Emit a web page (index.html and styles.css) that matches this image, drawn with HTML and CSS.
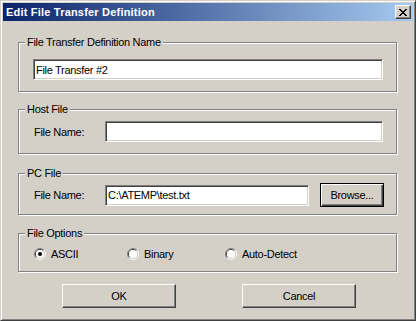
FILE: index.html
```html
<!DOCTYPE html>
<html lang="en">
<head>
    <meta charset="UTF-8">
    <title>Edit File Transfer Definition</title>
    <link rel="stylesheet" href="styles.css">
</head>
<body>
<div class="dialog">
    <div class="titlebar">
        <span class="title">Edit File Transfer Definition</span>
        <span class="close_btn">
            <svg width="8" height="7" viewBox="0 0 8 7">
                <path d="M0 0h2v1h-2zM6 0h2v1h-2zM1 1h2v1h-2zM5 1h2v1h-2zM2 2h4v1h-4zM3 3h2v1h-2zM2 4h4v1h-4zM1 5h2v1h-2zM5 5h2v1h-2zM0 6h2v1h-2zM6 6h2v1h-2z" fill="#000"/>
            </svg>
        </span>
    </div>

    <div class="content">
        <fieldset class="group group_name">
            <legend>File Transfer Definition Name</legend>
            <div class="row">
                <input type="text" class="edit edit_full" value="File Transfer #2">
            </div>
        </fieldset>

        <fieldset class="group group_host">
            <legend>Host File</legend>
            <div class="row">
                <label class="field_label">File Name:</label>
                <input type="text" class="edit edit_host" value="">
            </div>
        </fieldset>

        <fieldset class="group group_pc">
            <legend>PC File</legend>
            <div class="row">
                <label class="field_label">File Name:</label>
                <input type="text" class="edit edit_pc" value="C:\ATEMP\test.txt">
                <span class="btn btn_default browse">Browse...</span>
            </div>
        </fieldset>

        <fieldset class="group group_options">
            <legend>File Options</legend>
            <div class="row radios">
                <span class="radio radio_ascii">
                    <svg width="12" height="12" viewBox="0 0 12 12">
                        <path d="M2.1 9.9A5.5 5.5 0 0 1 9.9 2.1" fill="none" stroke="#808080"/>
                        <path d="M9.9 2.1A5.5 5.5 0 0 1 2.1 9.9" fill="none" stroke="#fff"/>
                        <path d="M2.8 9.2A4.5 4.5 0 0 1 9.2 2.8" fill="none" stroke="#404040"/>
                        <path d="M9.2 2.8A4.5 4.5 0 0 1 2.8 9.2" fill="none" stroke="#d4d0c8"/>
                        <circle cx="6" cy="6" r="4" fill="#fff"/>
                        <circle cx="6" cy="6" r="2" fill="#000"/>
                    </svg>
                    ASCII
                </span>
                <span class="radio radio_binary">
                    <svg width="12" height="12" viewBox="0 0 12 12">
                        <path d="M2.1 9.9A5.5 5.5 0 0 1 9.9 2.1" fill="none" stroke="#808080"/>
                        <path d="M9.9 2.1A5.5 5.5 0 0 1 2.1 9.9" fill="none" stroke="#fff"/>
                        <path d="M2.8 9.2A4.5 4.5 0 0 1 9.2 2.8" fill="none" stroke="#404040"/>
                        <path d="M9.2 2.8A4.5 4.5 0 0 1 2.8 9.2" fill="none" stroke="#d4d0c8"/>
                        <circle cx="6" cy="6" r="4" fill="#fff"/>
                    </svg>
                    Binary
                </span>
                <span class="radio radio_auto">
                    <svg width="12" height="12" viewBox="0 0 12 12">
                        <path d="M2.1 9.9A5.5 5.5 0 0 1 9.9 2.1" fill="none" stroke="#808080"/>
                        <path d="M9.9 2.1A5.5 5.5 0 0 1 2.1 9.9" fill="none" stroke="#fff"/>
                        <path d="M2.8 9.2A4.5 4.5 0 0 1 9.2 2.8" fill="none" stroke="#404040"/>
                        <path d="M9.2 2.8A4.5 4.5 0 0 1 2.8 9.2" fill="none" stroke="#d4d0c8"/>
                        <circle cx="6" cy="6" r="4" fill="#fff"/>
                    </svg>
                    Auto-Detect
                </span>
            </div>
        </fieldset>

        <div class="actions">
            <span class="btn ok">OK</span>
            <span class="btn cancel">Cancel</span>
        </div>
    </div>
</div>
</body>
</html>
```

FILE: styles.css
```css
body {
    margin: 0;
    padding: 0;
    background: #d4d0c8;
    font-family: "Liberation Sans", Arial, sans-serif;
    font-size: 11px;
    letter-spacing: -0.3px;
    color: #000;
}

.dialog {
    box-sizing: border-box;
    width: 416px;
    height: 321px;
    padding: 2px;
    background: #d4d0c8;
    border: 1px solid;
    border-color: #d4d0c8 #404040 #404040 #d4d0c8;
    box-shadow: inset 1px 1px 0 #fff, inset -1px -1px 0 #808080;
}

.titlebar {
    height: 18px;
    display: flex;
    align-items: center;
    justify-content: space-between;
    padding: 0 2px 0 3px;
    background: linear-gradient(to right, #0a246a, #a6caf0);
}

.title {
    color: #fff;
    font-weight: bold;
    font-size: 11px;
    letter-spacing: 0.2px;
    line-height: 13px;
}

.close_btn {
    box-sizing: border-box;
    width: 16px;
    height: 14px;
    display: flex;
    align-items: center;
    justify-content: center;
    background: #d4d0c8;
    border: 1px solid;
    border-color: #fff #404040 #404040 #fff;
    box-shadow: inset -1px -1px 0 #808080;
}

.content {
    padding: 0 15px;
}

/* etched group boxes */
.group {
    margin: 15px 1px 0 0;
    padding: 0;
    border: 1px solid #808080;
    box-shadow: 1px 1px 0 #fff, inset 1px 1px 0 #fff;
    min-inline-size: 0;
}

.group legend {
    margin-left: 6px;
    padding: 0 2px;
    line-height: 13px;
    background: #d4d0c8;
}

.group_host {
    margin-top: 11px;
}

.group_pc {
    margin-top: 13px;
}

.group_options {
    margin-top: 12px;
}

.row {
    display: flex;
    align-items: center;
}

.group_name .row {
    padding: 10px 0 11px 14px;
}

.group_host .row {
    padding: 5px 0 11px 15px;
}

.group_pc .row {
    padding: 3px 0 7px 15px;
}

.field_label {
    width: 71px;
}

.edit {
    box-sizing: border-box;
    height: 21px;
    margin: 0;
    padding: 0 2px;
    font-family: "Liberation Sans", Arial, sans-serif;
    font-size: 11px;
    letter-spacing: -0.3px;
    color: #000;
    background: #fff;
    border: 1px solid;
    border-color: #808080 #fff #fff #808080;
    box-shadow: inset 1px 1px 0 #404040, inset -1px -1px 0 #d4d0c8;
    outline: none;
}

.edit_full {
    width: 350px;
}

.edit_host {
    width: 278px;
}

.edit_pc {
    width: 204px;
}

.btn {
    box-sizing: border-box;
    display: flex;
    align-items: center;
    justify-content: center;
    height: 24px;
    background: #d4d0c8;
    border: 1px solid;
    border-color: #fff #404040 #404040 #fff;
    box-shadow: inset -1px -1px 0 #808080;
}

.btn_default {
    border: 1px solid #000;
    box-shadow: inset 1px 1px 0 #fff, inset -1px -1px 0 #404040, inset -2px -2px 0 #808080;
}

.browse {
    width: 64px;
    margin-left: 11px;
    align-self: flex-start;
}

.radios {
    height: 13px;
    padding: 7px 0 11px 15px;
}

.radio {
    display: flex;
    align-items: center;
}

.radio svg {
    margin-right: 5px;
}

.radio_ascii {
    width: 93px;
}

.radio_binary {
    width: 98px;
}

.actions {
    display: flex;
    justify-content: space-between;
    padding: 12px 42px 0 44px;
}

.actions .btn {
    width: 114px;
}
```
